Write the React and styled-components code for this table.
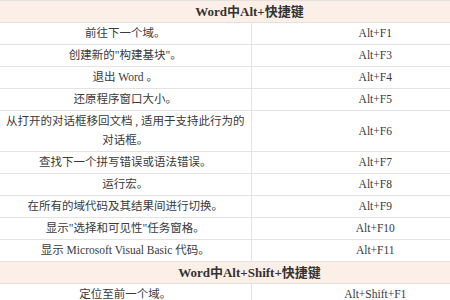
import React from "react";
import styled, { createGlobalStyle } from "styled-components";

const Global = createGlobalStyle`
  html, body { margin: 0; padding: 0; background: #ffffff; }
  body { font-family: "Liberation Serif", "Noto Sans CJK SC", serif; overflow: hidden; }
`;

const Table = styled.table`
  width: 500px;
  border-collapse: collapse;
  table-layout: fixed;
  font-family: "Liberation Serif", "Noto Sans CJK SC", serif;
  color: #3a3a3a;
`;

const HeadCell = styled.th`
  background: #fcefe7;
  border: 1px solid #e6e0dc;
  border-left: none;
  height: 21px;
  padding: 0;
  font-size: 13px;
  line-height: 19px;
  font-weight: bold;
  color: #333;
  text-align: center;
`;

const Cell = styled.td`
  border: 1px solid #e3e3e3;
  border-left: ${(p) => (p.$first ? "none" : "1px solid #e3e3e3")};
  padding: 1px 4px;
  font-size: 11.5px;
  line-height: 19px;
  text-align: center;
  vertical-align: middle;
  width: ${(p) => (p.$first ? "251px" : "auto")};
`;

const sections = [
  {
    title: "Word中Alt+快捷键",
    rows: [
      ["前往下一个域。", "Alt+F1"],
      ['创建新的"构建基块"。', "Alt+F3"],
      ["退出 Word 。", "Alt+F4"],
      ["还原程序窗口大小。", "Alt+F5"],
      ["从打开的对话框移回文档 , 适用于支持此行为的对话框。", "Alt+F6"],
      ["查找下一个拼写错误或语法错误。", "Alt+F7"],
      ["运行宏。", "Alt+F8"],
      ["在所有的域代码及其结果间进行切换。", "Alt+F9"],
      ['显示"选择和可见性"任务窗格。', "Alt+F10"],
      ["显示 Microsoft Visual Basic 代码。", "Alt+F11"],
    ],
  },
  {
    title: "Word中Alt+Shift+快捷键",
    rows: [
      ["定位至前一个域。", "Alt+Shift+F1"],
      ["保存文档。", "Alt+Shift+F2"],
    ],
  },
];

export default function App() {
  return (
    <>
      <Global />
      <Table>
        <colgroup>
          <col style={{ width: 251 }} />
          <col />
        </colgroup>
        <tbody>
          {sections.map((s) => (
            <React.Fragment key={s.title}>
              <tr>
                <HeadCell colSpan={2}>{s.title}</HeadCell>
              </tr>
              {s.rows.map(([desc, key]) => (
                <tr key={key}>
                  <Cell $first>{desc}</Cell>
                  <Cell>{key}</Cell>
                </tr>
              ))}
            </React.Fragment>
          ))}
        </tbody>
      </Table>
    </>
  );
}
